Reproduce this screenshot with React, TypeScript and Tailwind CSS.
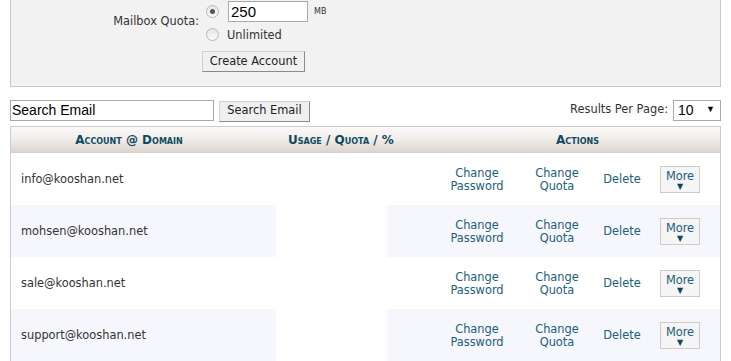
import React from "react";

const rows = [
    { email: "info@kooshan.net", shaded: false },
    { email: "mohsen@kooshan.net", shaded: true },
    { email: "sale@kooshan.net", shaded: false },
    { email: "support@kooshan.net", shaded: true },
];

const Radio = ({ checked }: { checked?: boolean }) => (
    <span className="flex items-center justify-center w-[13px] h-[13px] rounded-full border border-[#b8b8b8] bg-gradient-to-b from-[#e6e6e6] to-[#fafafa]">
        {checked && <span className="w-[5px] h-[5px] rounded-full bg-[#555]" />}
    </span>
);

export default function App() {
    return (
        <div className="w-[731px] h-[361px] overflow-hidden bg-white font-['DejaVu_Sans',sans-serif] text-[11.4px] text-[#333]">
            <div className="px-[10px]">
                {/* Create account panel */}
                <div className="h-[87px] border border-t-0 border-[#c8c8c8] bg-[#f2f2f2] flex">
                    <div className="w-[188px] text-right pt-[15px] leading-[13px] text-[#333]">Mailbox Quota:</div>
                    <div className="flex flex-col pl-[7px]">
                        <div className="flex items-center h-[22px] pt-[1px]">
                            <div className="self-start pt-[4px]"><Radio checked /></div>
                            <div className="ml-[9px] w-[80px] h-[21px] border border-[#a9a9a9] bg-white px-[2px] font-['Liberation_Sans',sans-serif] text-[15px] leading-[19px] text-black">250</div>
                            <span className="ml-[6px] text-[8px] text-[#333]">MB</span>
                        </div>
                        <div className="flex items-center h-[16px] mt-[4px]">
                            <Radio />
                            <span className="ml-[8px] text-[#333] leading-[13px] mt-[2px]">Unlimited</span>
                        </div>
                        <div className="mt-[9px] -ml-[4px] w-[103px] h-[21px] flex items-center justify-center bg-[#f0f0f0] border border-[#d0d0d0] border-b-[#8a8a8a] border-r-[#8a8a8a] text-[#222]">Create Account</div>
                    </div>
                </div>

                {/* Search row */}
                <div className="flex items-center mt-[12px] h-[22px]">
                    <div className="w-[204px] h-[21px] border border-[#a9a9a9] px-[1px] font-['Liberation_Sans',sans-serif] text-[14px] leading-[19px] text-black">Search Email</div>
                    <div className="ml-[5px] mt-[2px] w-[91px] h-[21px] flex items-center justify-center bg-[#f0f0f0] border border-[#d0d0d0] border-b-[#8a8a8a] border-r-[#8a8a8a] text-[#222]">Search Email</div>
                    <div className="ml-auto flex items-center">
                        <span className="text-[#333]">Results Per Page:</span>
                        <div className="ml-[5px] w-[48px] h-[21px] border border-[#a9a9a9] flex items-center justify-between pl-[4px] pr-[5px] font-['Liberation_Sans',sans-serif] text-[14px] text-black">
                            <span>10</span>
                            <span className="text-[9px]">▼</span>
                        </div>
                    </div>
                </div>

                {/* Table */}
                <div className="mt-[5px] border border-b-0 border-[#cccccc]">
                    <div className="flex items-center h-[26px] bg-gradient-to-b from-[#fbfaf9] via-[#f1ece8] to-[#ddd4ce] border-b border-[#d8d0ca] font-bold [font-variant:small-caps] text-[#0d4a62] text-[12px]">
                        <div className="w-[236px] text-center">Account @ Domain</div>
                        <div className="w-[188px] text-center">Usage / Quota / %</div>
                        <div className="flex-1 text-center">Actions</div>
                    </div>
                    {rows.map((r) => (
                        <div key={r.email} className="flex h-[52px]">
                            <div className={`w-[265px] flex items-center pl-[10px] pt-[1px] ${r.shaded ? "bg-[#f6f7fc]" : ""}`}>{r.email}</div>
                            <div className="w-[111px]" />
                            <div className={`flex-1 flex items-center pl-[50px] pt-[1px] text-[#22607a] text-center leading-[13px] ${r.shaded ? "bg-[#f6f7fc]" : ""}`}>
                                <div className="w-[80px]">Change<br />Password</div>
                                <div className="w-[80px]">Change<br />Quota</div>
                                <div className="w-[50px]">Delete</div>
                                <div className="ml-[13px] w-[40px] h-[27px] border border-[#cccccc] bg-[#f5f5f5] flex flex-col items-center pt-[4px] leading-[11px]">
                                    <span>More</span>
                                    <span className="text-[8px] leading-[9px] text-[#0b4658]">▼</span>
                                </div>
                            </div>
                        </div>
                    ))}
                </div>
            </div>
        </div>
    );
}
